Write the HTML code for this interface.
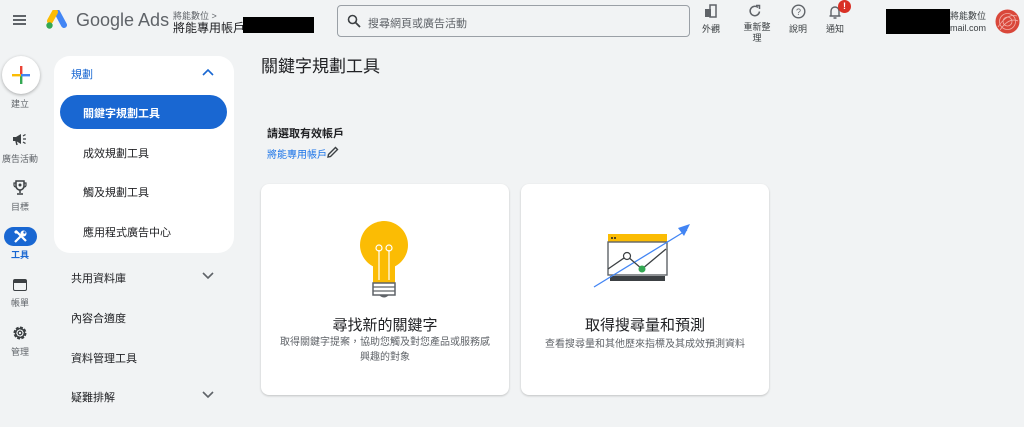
<!DOCTYPE html>
<html><head><meta charset="utf-8"><style>
*{margin:0;padding:0;box-sizing:border-box}
body{width:1024px;height:427px;background:#f1f3f4;font-family:"Liberation Sans","Noto Sans CJK TC",sans-serif;color:#202124;position:relative;overflow:hidden}
.a{position:absolute}
.t{font-size:11px;color:#3c4043}
.rail{font-size:9px;color:#5f6368;text-align:center;width:40px;left:0}
.nav{font-size:11px;color:#202124;left:83px}
.sec{font-size:11px;color:#202124;left:71px}
.card{background:#fff;border-radius:8px;box-shadow:0 1px 2px rgba(0,0,0,.2);top:184px;width:248px;height:211px}
</style></head><body>
<div class="a" style="left:13px;top:15px;width:13px;height:2px;background:#5f6368;box-shadow:0 4px 0 #5f6368,0 8px 0 #5f6368"></div>
<svg class="a" style="left:45px;top:10px" width="22" height="20" viewBox="0 0 22 20"><path d="M12 2 L19 15" stroke="#4285f4" stroke-width="6" stroke-linecap="round"/><path d="M10 2 L5 11" stroke="#fbbc04" stroke-width="6" stroke-linecap="round"/><circle cx="4.5" cy="15.5" r="3.2" fill="#34a853"/></svg>
<div class="a" style="left:76px;top:10px;font-size:18px;color:#5f6368">Google Ads</div>
<div class="a" style="left:173px;top:9px;font-size:9px;color:#5f6368">將能數位 &gt;</div>
<div class="a" style="left:173px;top:19px;font-size:12px;color:#202124">將能專用帳戶</div>
<div class="a" style="left:243px;top:17px;width:71px;height:16px;background:#000"></div>
<div class="a" style="left:337px;top:5px;width:353px;height:32px;border:1px solid #9aa0a6;border-radius:4px;background:#f1f3f4"></div>
<svg class="a" style="left:347px;top:14px" width="14" height="14" viewBox="0 0 14 14"><circle cx="5.5" cy="5.5" r="4" stroke="#3c4043" stroke-width="1.6" fill="none"/><path d="M8.5 8.5 L13 13" stroke="#3c4043" stroke-width="1.8"/></svg>
<div class="a" style="left:368px;top:15px;font-size:11px;color:#5f6368">搜尋網頁或廣告活動</div>
<svg class="a" style="left:703px;top:4px" width="14" height="14" viewBox="0 0 14 14"><rect x="7" y="1" width="6" height="12" fill="none" stroke="#5f6368" stroke-width="1.5"/><rect x="2" y="5" width="6" height="8" fill="#5f6368"/></svg>
<div class="a t" style="left:702px;top:22px;font-size:9px">外觀</div>
<svg class="a" style="left:748px;top:4px" width="14" height="14" viewBox="0 0 14 14"><path d="M11.5 7.5 A4.7 4.7 0 1 1 10 3.5" fill="none" stroke="#5f6368" stroke-width="1.5"/><path d="M8 1.5 L11.5 1.5 L11.5 5" fill="none" stroke="#5f6368" stroke-width="1.5"/></svg>
<div class="a t" style="left:742px;top:22px;font-size:9px;width:30px;text-align:center;line-height:11px">重新整理</div>
<svg class="a" style="left:791px;top:4px" width="15" height="15" viewBox="0 0 15 15"><circle cx="7.5" cy="7.5" r="6.3" fill="none" stroke="#5f6368" stroke-width="1.4"/><text x="7.5" y="11" font-size="9" text-anchor="middle" fill="#5f6368" font-family="Liberation Sans">?</text></svg>
<div class="a t" style="left:789px;top:22px;font-size:9px">說明</div>
<svg class="a" style="left:828px;top:4px" width="14" height="16" viewBox="0 0 14 16"><path d="M3 12 V7 a4 4 0 0 1 8 0 V12 H12.5 M1.5 12 H12.5 M5.5 14 H8.5" fill="none" stroke="#5f6368" stroke-width="1.4"/></svg>
<div class="a" style="left:838px;top:0px;width:13px;height:13px;border-radius:50%;background:#d93025;color:#fff;font-size:9px;font-weight:bold;text-align:center;line-height:13px">!</div>
<div class="a t" style="left:826px;top:22px;font-size:9px">通知</div>
<div class="a" style="left:886px;top:9px;width:64px;height:25px;background:#000"></div>
<div class="a t" style="left:950px;top:10px;font-size:9px;line-height:12px">將能數位<br>mail.com</div>
<svg class="a" style="left:995px;top:9px" width="25" height="25" viewBox="0 0 25 25"><circle cx="12.5" cy="12.5" r="12" fill="#d9473a"/><circle cx="12.5" cy="12.5" r="8" fill="none" stroke="#f3b0a8" stroke-width=".8"/><circle cx="12.5" cy="12.5" r="4.5" fill="none" stroke="#f3b0a8" stroke-width=".8"/><path d="M3 18 Q12 4 22 7 M5 21 Q14 8 23 12" stroke="#f3b0a8" stroke-width=".8" fill="none"/></svg>
<!-- rail -->
<div class="a" style="left:2px;top:56px;width:38px;height:38px;border-radius:50%;background:#fff;box-shadow:0 1px 3px rgba(0,0,0,.3)"></div>
<svg class="a" style="left:11px;top:65px" width="20" height="20" viewBox="0 0 20 20"><rect x="9" y="1" width="2.4" height="9" fill="#ea4335"/><rect x="9" y="10" width="2.4" height="9" fill="#34a853"/><rect x="1" y="9" width="9" height="2.4" fill="#fbbc04"/><rect x="10" y="9" width="9" height="2.4" fill="#4285f4"/></svg>
<div class="a rail" style="top:97px">建立</div>
<svg class="a" style="left:12px;top:132px" width="16" height="14" viewBox="0 0 16 14"><path d="M1 5 H4 L9 2 V12 L4 9 H1 Z" fill="#3c4043"/><path d="M4 9 L5 13" stroke="#3c4043" stroke-width="1.5"/><path d="M11 7 H14 M11 4 L13.5 2.5 M11 10 L13.5 11.5" stroke="#3c4043" stroke-width="1.3"/></svg>
<div class="a rail" style="top:152px">廣告活動</div>
<svg class="a" style="left:13px;top:180px" width="14" height="15" viewBox="0 0 14 15"><path d="M3 1 H11 V6 A4 4 0 0 1 3 6 Z" fill="none" stroke="#3c4043" stroke-width="1.5"/><path d="M3 3 H1 V5 Q1 7 3 7 M11 3 H13 V5 Q13 7 11 7" fill="none" stroke="#3c4043" stroke-width="1.2"/><path d="M7 10 V13 M4 14 H10" stroke="#3c4043" stroke-width="1.5"/><circle cx="7" cy="5" r="1.5" fill="#3c4043"/></svg>
<div class="a rail" style="top:200px">目標</div>
<div class="a" style="left:4px;top:227px;width:33px;height:19px;border-radius:10px;background:#1967d2"></div>
<svg class="a" style="left:13px;top:229px" width="15" height="15" viewBox="0 0 15 15"><path d="M2 13 L9 6" stroke="#fff" stroke-width="2.2"/><circle cx="10.5" cy="4.5" r="3" fill="#fff"/><circle cx="11.5" cy="3.5" r="1.2" fill="#1967d2"/><path d="M3 2 L13 12" stroke="#fff" stroke-width="2.2"/><path d="M1 3 L3 1 L5 3 L3 5 Z" fill="#fff"/></svg>
<div class="a rail" style="top:248px;color:#1967d2;font-weight:bold">工具</div>
<div class="a" style="left:13px;top:279px;width:14px;height:12px;border:1.6px solid #3c4043;border-radius:2px;border-top-width:4px"></div>
<div class="a rail" style="top:296px">帳單</div>
<svg class="a" style="left:12px;top:325px" width="16" height="16" viewBox="0 0 16 16"><circle cx="8" cy="8" r="5" fill="none" stroke="#3c4043" stroke-width="3" stroke-dasharray="2.6 1.3"/><circle cx="8" cy="8" r="4.5" fill="none" stroke="#3c4043" stroke-width="1.5"/><circle cx="8" cy="8" r="1.8" fill="none" stroke="#3c4043" stroke-width="1.3"/></svg>
<div class="a rail" style="top:345px">管理</div>
<!-- left panel -->
<div class="a" style="left:54px;top:56px;width:180px;height:197px;background:#fff;border-radius:16px"></div>
<div class="a" style="left:71px;top:66px;font-size:11px;color:#1967d2">規劃</div>
<svg class="a" style="left:202px;top:68px" width="12" height="8" viewBox="0 0 12 8"><path d="M1 7 L6 2 L11 7" fill="none" stroke="#1967d2" stroke-width="1.6"/></svg>
<div class="a" style="left:60px;top:95px;width:167px;height:34px;border-radius:17px;background:#1967d2"></div>
<div class="a nav" style="top:105px;color:#fff;font-weight:bold">關鍵字規劃工具</div>
<div class="a nav" style="top:145px">成效規劃工具</div>
<div class="a nav" style="top:184px">觸及規劃工具</div>
<div class="a nav" style="top:224px">應用程式廣告中心</div>
<div class="a sec" style="top:270px">共用資料庫</div>
<div class="a sec" style="top:310px">內容合適度</div>
<div class="a sec" style="top:350px">資料管理工具</div>
<div class="a sec" style="top:389px">疑難排解</div>
<svg class="a" style="left:202px;top:272px" width="12" height="8" viewBox="0 0 12 8"><path d="M1 1 L6 6 L11 1" fill="none" stroke="#5f6368" stroke-width="1.6"/></svg>
<svg class="a" style="left:202px;top:391px" width="12" height="8" viewBox="0 0 12 8"><path d="M1 1 L6 6 L11 1" fill="none" stroke="#5f6368" stroke-width="1.6"/></svg>
<!-- main -->
<div class="a" style="left:261px;top:52px;font-size:17px;color:#202124">關鍵字規劃工具</div>
<div class="a" style="left:267px;top:125px;font-size:11px;font-weight:bold">請選取有效帳戶</div>
<div class="a" style="left:267px;top:146px;font-size:10px;color:#1a73e8">將能專用帳戶</div>
<svg class="a" style="left:326px;top:145px" width="14" height="14" viewBox="0 0 14 14"><path d="M2 12 L2.5 9.5 L9.5 2.5 L11.5 4.5 L4.5 11.5 Z" fill="none" stroke="#3c4043" stroke-width="1.4"/></svg>
<div class="a card" style="left:261px"></div>
<div class="a card" style="left:521px"></div>
<svg class="a" style="left:358px;top:220px" width="52" height="90" viewBox="0 0 52 90"><circle cx="26" cy="25" r="24" fill="#fbbc04"/><rect x="15" y="35" width="22" height="28" fill="#fbbc04"/><path d="M21 60 V30 M31 60 V30" stroke="#fff" stroke-width="1.2"/><circle cx="21" cy="28" r="3" fill="none" stroke="#fff" stroke-width="1.2"/><circle cx="31" cy="28" r="3" fill="none" stroke="#fff" stroke-width="1.2"/><rect x="15" y="63" width="22" height="12" fill="#fff" stroke="#5f6368" stroke-width="1.5"/><path d="M15 67 H37 M15 71 H37" stroke="#5f6368" stroke-width="1.2"/><path d="M21 75 Q26 80 31 75" fill="#5f6368"/></svg>
<svg class="a" style="left:590px;top:224px" width="102" height="66" viewBox="0 0 102 66"><rect x="18" y="10" width="59" height="8" fill="#fbbc04"/><circle cx="22" cy="14" r="1" fill="#202124"/><circle cx="25" cy="14" r="1" fill="#202124"/><rect x="18" y="18" width="59" height="33" fill="#fff" stroke="#5f6368" stroke-width="1.4"/><rect x="20" y="52" width="55" height="5" fill="#3c4043"/><path d="M4 63 L97 6" stroke="#4285f4" stroke-width="1.3"/><path d="M88 4 L100 0 L94 12 Z" fill="#4285f4"/><path d="M18 45 L37 32 L52 45 L76 25" stroke="#3c4043" stroke-width="1.3" fill="none"/><circle cx="37" cy="32" r="3.5" fill="#fff" stroke="#3c4043" stroke-width="1.2"/><circle cx="52" cy="45" r="3.5" fill="#34a853"/></svg>
<div class="a" style="left:261px;width:248px;top:314px;text-align:center;font-size:15px">尋找新的關鍵字</div>
<div class="a" style="left:277px;width:216px;top:335px;text-align:center;font-size:10px;color:#5f6368;line-height:15px">取得關鍵字提案，協助您觸及對您產品或服務感興趣的對象</div>
<div class="a" style="left:521px;width:248px;top:314px;text-align:center;font-size:15px">取得搜尋量和預測</div>
<div class="a" style="left:521px;width:248px;top:335px;text-align:center;font-size:10px;color:#5f6368">查看搜尋量和其他歷來指標及其成效預測資料</div>
</body></html>
